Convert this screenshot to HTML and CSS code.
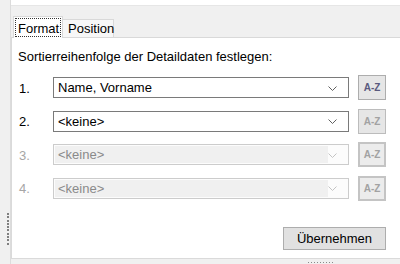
FILE: index.html
```html
<!DOCTYPE html>
<html lang="de">
<head>
<meta charset="utf-8">
<link rel="stylesheet" href="styles.css">
</head>
<body>
<div class="side"><div class="vgrip"></div></div>
<div class="main">
  <div class="topstrip"></div>
  <div class="tabrow">
    <div class="tab active"><span class="focus">Format</span></div>
    <div class="tab">Position</div>
  </div>
  <div class="panel">
    <div class="caption">Sortierreihenfolge der Detaildaten festlegen:</div>
    <div class="rows">
      <div class="row">
        <span class="num">1.</span>
        <div class="combo"><span class="field">Name, Vorname</span><span class="arrow"><svg width="9" height="5" viewBox="0 0 9 5"><polyline points="0.5,0.5 4.5,4.5 8.5,0.5" fill="none" stroke="#606060" stroke-width="1"/></svg></span></div>
        <div class="az">A-Z</div>
      </div>
      <div class="row">
        <span class="num">2.</span>
        <div class="combo"><span class="field">&lt;keine&gt;</span><span class="arrow"><svg width="9" height="5" viewBox="0 0 9 5"><polyline points="0.5,0.5 4.5,4.5 8.5,0.5" fill="none" stroke="#606060" stroke-width="1"/></svg></span></div>
        <div class="az az-dim">A-Z</div>
      </div>
      <div class="row disabled">
        <span class="num">3.</span>
        <div class="combo"><span class="field">&lt;keine&gt;</span><span class="arrow"><svg width="9" height="5" viewBox="0 0 9 5"><polyline points="0.5,0.5 4.5,4.5 8.5,0.5" fill="none" stroke="#c4c4c4" stroke-width="1"/></svg></span></div>
        <div class="az az-off">A-Z</div>
      </div>
      <div class="row disabled">
        <span class="num">4.</span>
        <div class="combo"><span class="field">&lt;keine&gt;</span><span class="arrow"><svg width="9" height="5" viewBox="0 0 9 5"><polyline points="0.5,0.5 4.5,4.5 8.5,0.5" fill="none" stroke="#c4c4c4" stroke-width="1"/></svg></span></div>
        <div class="az az-off">A-Z</div>
      </div>
      <div class="apply">Übernehmen</div>
    </div>
  </div>
  <div class="bottomstrip"><div class="hgrip"></div></div>
</div>
</body>
</html>
```
FILE: styles.css
```css
html, body {
  margin: 0;
  padding: 0;
}
body {
  width: 400px;
  height: 264px;
  overflow: hidden;
  background: #f0f0f0;
  display: flex;
  font-family: "Liberation Sans", Arial, sans-serif;
  font-size: 13px;
  color: #000;
}
.side {
  width: 10px;
  flex: none;
  display: flex;
  flex-direction: column;
  justify-content: flex-end;
  align-items: flex-start;
  padding-bottom: 19px;
  box-sizing: border-box;
}
.vgrip {
  margin-left: 7px;
  width: 2px;
  height: 32px;
  background: repeating-linear-gradient(to bottom, #7f7f7f 0 2px, transparent 2px 3.3px);
}
.main {
  flex: 1;
  display: flex;
  flex-direction: column;
  border-left: 1px solid #dcdcdc;
  min-width: 0;
}
.topstrip {
  height: 5px;
  background: #fff;
  border-bottom: 1px solid #e6e6e6;
  flex: none;
}
.tabrow {
  height: 32px;
  flex: none;
  box-sizing: border-box;
  display: flex;
  align-items: flex-end;
  border-bottom: 1px solid #d9d9d9;
  padding-left: 2px;
}
.tab {
  box-sizing: border-box;
  height: 18px;
  border: 1px solid #d9d9d9;
  border-bottom: none;
  background: #f7f7f7;
  padding: 0 3px 0 5px;
  line-height: 18px;
  width: 52px;
  margin-left: -1px;
  white-space: nowrap;
}
.tab.active {
  height: 22px;
  width: 50px;
  margin-left: 0;
  margin-bottom: -1px;
  background: #fff;
  padding: 1px;
  display: flex;
}
.focus {
  flex: 1;
  border: 1px dotted #333;
  line-height: 17px;
  padding-left: 2px;
  padding-top: 1px;
}
.panel {
  flex: 1;
  background: #fff;
  border-left: 1px solid #dadada;
  border-bottom: 1px solid #dadada;
  padding: 11px 0 0 6px;
  display: flex;
  flex-direction: column;
}
.caption {
  line-height: 15px;
  height: 15px;
}
.rows {
  margin-top: 11px;
  width: 368px;
  display: flex;
  flex-direction: column;
  gap: 8.67px;
}
.row {
  display: flex;
  align-items: center;
  height: 25px;
}
.num {
  width: 35px;
  flex: none;
  padding-left: 1px;
  box-sizing: border-box;
  line-height: 15px;
  padding-top: 1px;
}
.combo {
  width: 296px;
  height: 21px;
  box-sizing: border-box;
  border: 1px solid #7a7a7a;
  background: #fff;
  display: flex;
  flex: none;
}
.field {
  flex: 1;
  padding-left: 4px;
  line-height: 19px;
  white-space: nowrap;
}
.arrow {
  width: 20px;
  display: flex;
  align-items: center;
  justify-content: flex-start;
  padding-top: 1px;
  box-sizing: border-box;
}
.arrow svg {
  display: block;
}
.row.disabled .num {
  color: #a6a6a6;
}
.row.disabled .combo {
  border-color: #cccccc;
  background: #fcfcfc;
}
.row.disabled .field {
  background: #f0f0f0;
  margin: 1px 0 1px 1px;
  line-height: 17px;
  padding-left: 3px;
  color: #8a8a8a;
}
.az {
  margin-left: 9px;
  width: 28px;
  height: 25px;
  box-sizing: border-box;
  border: 1px solid #adadad;
  background: #e6e6e6;
  font-size: 10px;
  font-weight: bold;
  color: #5a5a7e;
  display: flex;
  align-items: center;
  justify-content: center;
  flex: none;
}
.az-dim {
  color: #a2a2a2;
  border-color: #bcbcbc;
}
.az-off {
  color: #a2a2a2;
  border: 2px solid #c4c4c4;
  background: #ececec;
}
.apply {
  margin-top: 17px;
  align-self: flex-end;
  width: 103px;
  height: 23px;
  box-sizing: border-box;
  border: 1px solid #adadad;
  background: #e1e1e1;
  text-align: center;
  line-height: 21px;
}
.bottomstrip {
  height: 5px;
  flex: none;
  display: flex;
  align-items: flex-end;
}
.hgrip {
  margin-left: 297px;
  margin-bottom: 1px;
  width: 27px;
  height: 1px;
  background: repeating-linear-gradient(to right, #8a8a8a 0 1px, transparent 1px 3px);
}
```
